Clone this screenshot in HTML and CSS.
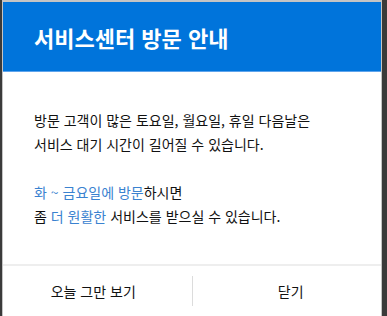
FILE: index.html
```html
<!DOCTYPE html>
<html lang="ko">
  <head>
    <meta charset="UTF-8" />
    <title>서비스센터 방문 안내</title>
    <link rel="stylesheet" href="styles.css">
  </head>
  <body>
    <div class="modal">
      <div class="modal-header">서비스센터 방문 안내</div>
      <div class="modal-body">
        <p>방문 고객이 많은 토요일, 월요일, 휴일 다음날은<br />서비스 대기 시간이 길어질 수 있습니다.</p>
        <p><span class="point">화 ~ 금요일에 방문</span>하시면<br />좀 <span class="point">더 원활한</span> 서비스를 받으실 수 있습니다.</p>
      </div>
      <div class="modal-footer">
        <button class="btn btn-today">오늘 그만 보기</button>
        <span class="divider"></span>
        <button class="btn btn-close">닫기</button>
      </div>
    </div>
  </body>
</html>
```

FILE: styles.css
```css
body {
  margin: 0;
  padding: 0 5px 0 2px;
  height: 316px;
  background-color: #3a3a3a;
  font-family: "Noto Sans CJK KR", "Noto Sans", sans-serif;
  overflow: hidden;
}

.modal {
  display: flex;
  flex-direction: column;
  height: 314px;
  background: white;
  border: 1px solid #c4c4c4;
  border-top-width: 2px;
}

.modal-header {
  height: 69px;
  display: flex;
  align-items: center;
  padding-left: 31px;
  background-color: #0074db;
  border-bottom: 1px solid #5ea4ec;
  color: white;
  font-size: 22px;
  font-weight: bold;
}

.modal-body {
  flex: 1;
  padding: 36px 31px 0;
  font-size: 14px;
  line-height: 24px;
  color: #111;
}

.modal-body p {
  margin: 0 0 24px;
}

.point {
  color: #3a82d0;
}

/* 하단 버튼 */
.modal-footer {
  display: flex;
  align-items: center;
  height: 50px;
  border-top: 2px solid #eeeeee;
}

.btn {
  flex: 1;
  height: 100%;
  padding: 0;
  border: none;
  background: none;
  font-family: inherit;
  font-size: 14px;
  color: #111;
  cursor: pointer;
}

.btn-today {
  padding-right: 8px;
}

.btn-close {
  padding-left: 8px;
}

.divider {
  width: 1px;
  height: 30px;
  background-color: #dcdcdc;
}
```
